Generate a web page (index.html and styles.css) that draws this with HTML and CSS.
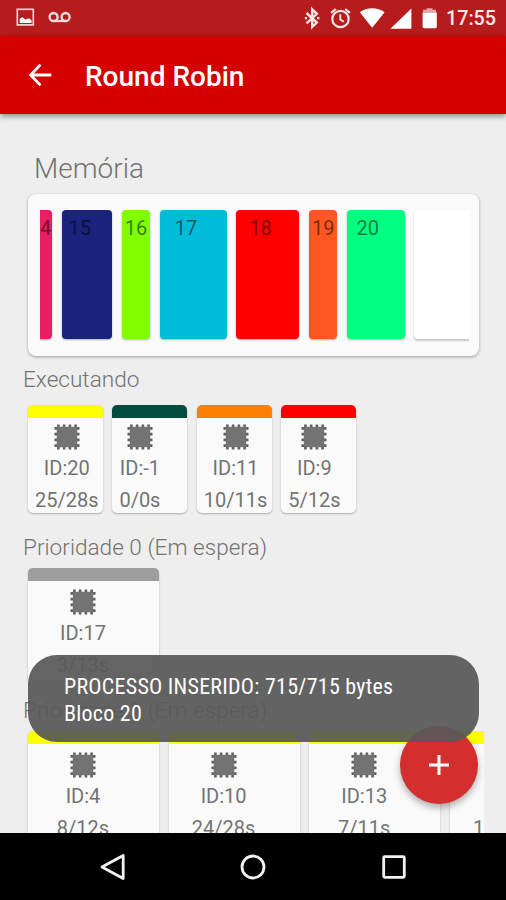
FILE: index.html
```html
<!doctype html>
<html lang="pt-BR">
  <head>
    <meta charset="UTF-8" />
    <meta name="viewport" content="width=device-width, initial-scale=1.0" />
    <title>Round Robin</title>
    <link rel="stylesheet" href="styles.css">
  </head>
  <body>
    <!-- Shared chip icon -->
    <svg class="defs" width="0" height="0">
      <symbol id="chip" viewBox="0 0 26 26">
        <path d="M4.4 0.5V25.5M10.1 0.5V25.5M15.9 0.5V25.5M21.6 0.5V25.5M0.5 4.4H25.5M0.5 10.1H25.5M0.5 15.9H25.5M0.5 21.6H25.5" stroke="#5f5f5f" stroke-width="2.6" fill="none" />
        <rect x="2.8" y="2.8" width="20.4" height="20.4" fill="#737373" />
      </symbol>
    </svg>

    <div class="status-bar">
      <svg class="status-left" width="56" height="20" viewBox="0 0 56 20" fill="none">
        <rect x="1.3" y="1.3" width="16" height="15.6" stroke="#f9dede" stroke-width="1.6" />
        <path d="M3.7 15V10.8L6.5 9.3L9.5 11.6L13.2 10.3L15.6 12.5V15Z" fill="#fff" />
        <circle cx="37.6" cy="9" r="4" stroke="#f9dede" stroke-width="2.3" />
        <circle cx="49.6" cy="9" r="4" stroke="#f9dede" stroke-width="2.3" />
        <path d="M37.6 13H49.6" stroke="#f9dede" stroke-width="2.3" />
      </svg>
      <svg class="status-right" width="134" height="24" viewBox="0 0 134 24" fill="none">
        <path d="M2.5 7L12.8 16.6L8.2 21V3.4L12.8 7.8L2.5 17.4" stroke="#fbe4e4" stroke-width="2.4" />
        <path d="M0.8 12.2h2.2M13 12.2h2.4" stroke="#fbe4e4" stroke-width="2.2" />
        <circle cx="36.5" cy="13" r="8.2" stroke="#fbe4e4" stroke-width="2.2" />
        <path d="M36.3 8.3V13.5L39.8 15.8" stroke="#fbe4e4" stroke-width="1.9" />
        <path d="M27.1 6.8L31.8 3M45.9 6.8L41.2 3" stroke="#fbe4e4" stroke-width="2.2" />
        <path d="M55.8 6.2C62.8 0.9 73.6 0.9 80.6 6.2L68.2 21.8Z" fill="#fff" />
        <path d="M107.4 2.4V22.7H86.4Z" fill="#fff" />
        <path d="M119 6.5V3.8H122.5V2.2H128.5V3.8H132V6.5Z" fill="#e5a7a7" />
        <path d="M118.6 6.5H132.8V20.8Q132.8 22.2 131.4 22.2H120Q118.6 22.2 118.6 20.8Z" fill="#fff" />
      </svg>
      <span class="clock">17:55</span>
    </div>

    <header class="app-bar">
      <svg width="24" height="24" viewBox="0 0 24 24" fill="none" stroke="#fff" stroke-width="2.8">
        <path d="M12.5 1.6L2.6 12L12.5 22.4M2.6 12H23.3" />
      </svg>
      <h1>Round Robin</h1>
    </header>

    <main>
      <h2 class="memory-title">Memória</h2>
      <section class="memory">
        <div class="blocks">
          <div class="block b14">4</div>
          <div class="block b15">15</div>
          <div class="block b16">16</div>
          <div class="block b17">17</div>
          <div class="block b18">18</div>
          <div class="block b19">19</div>
          <div class="block b20">20</div>
          <div class="block free"></div>
        </div>
      </section>

      <h3>Executando</h3>
      <div class="row running">
        <div class="card yellow">
          <div class="info"><svg><use href="#chip" /></svg><span>ID:20</span><span>25/28s</span></div>
        </div>
        <div class="card green">
          <div class="info"><svg><use href="#chip" /></svg><span>ID:-1</span><span>0/0s</span></div>
        </div>
        <div class="card orange">
          <div class="info"><svg><use href="#chip" /></svg><span>ID:11</span><span>10/11s</span></div>
        </div>
        <div class="card red">
          <div class="info"><svg><use href="#chip" /></svg><span>ID:9</span><span>5/12s</span></div>
        </div>
      </div>

      <h3>Prioridade 0 (Em espera)</h3>
      <div class="row waiting">
        <div class="card gray">
          <div class="info"><svg><use href="#chip" /></svg><span>ID:17</span><span>3/13s</span></div>
        </div>
      </div>

      <h3>Prioridade 1 (Em espera)</h3>
      <div class="row waiting">
        <div class="card yellow">
          <div class="info"><svg><use href="#chip" /></svg><span>ID:4</span><span>8/12s</span></div>
        </div>
        <div class="card yellow">
          <div class="info"><svg><use href="#chip" /></svg><span>ID:10</span><span>24/28s</span></div>
        </div>
        <div class="card yellow">
          <div class="info"><svg><use href="#chip" /></svg><span>ID:13</span><span>7/11s</span></div>
        </div>
        <div class="card yellow">
          <div class="info"><svg></svg><span></span><span>10/14s</span></div>
        </div>
      </div>
    </main>

    <button class="fab" aria-label="Inserir processo">
      <svg width="22" height="22" viewBox="0 0 22 22" stroke="#fff" stroke-width="3">
        <path d="M11 1V21M1 11H21" />
      </svg>
    </button>

    <div class="toast"><p>PROCESSO INSERIDO: 715/715 bytes<br>Bloco 20</p></div>

    <nav class="nav-bar">
      <svg width="28" height="28" viewBox="0 0 28 28"><path d="M3 14L24.2 2.4V25.6Z" /></svg>
      <svg width="28" height="28" viewBox="0 0 28 28"><circle cx="14" cy="14" r="11" /></svg>
      <svg width="28" height="28" viewBox="0 0 28 28"><rect x="3.7" y="3.7" width="20.6" height="20.6" rx="1" /></svg>
    </nav>
  </body>
</html>
```
FILE: styles.css
```css
* {
  box-sizing: border-box;
}

body {
  margin: 0;
  height: 900px;
  display: flex;
  flex-direction: column;
  position: relative;
  overflow: hidden;
  background: #eee;
  color: #737373;
  font-family: Roboto, "Liberation Sans", sans-serif;
}

h1,
h2,
h3,
p {
  margin: 0;
}

.defs {
  position: absolute;
}

/* Android status bar */
.status-bar {
  flex: none;
  height: 36px;
  display: flex;
  align-items: center;
  padding: 0 9px 0 16px;
  background: #b71c1c;
}

.status-right {
  margin-left: auto;
}

.clock {
  width: 51px;
  margin-left: 8px;
  padding-top: 2px;
  color: #fbe9e9;
  font-size: 19.7px;
  font-weight: 500;
  line-height: 24px;
}

/* Toolbar */
.app-bar {
  flex: none;
  height: 78px;
  display: flex;
  align-items: center;
  gap: 33px;
  padding-left: 28px;
  background: #d50000;
  box-shadow: 0 2px 6px rgba(0, 0, 0, 0.45);
  z-index: 1;
}

h1 {
  padding-top: 4px;
  color: #fff;
  font-size: 28px;
  font-weight: 500;
  line-height: 36px;
}

main {
  flex: 1;
  min-height: 0;
  overflow: hidden;
  padding: 37px 22px 0 24px;
}

.memory-title {
  margin-left: 10px;
  font-size: 28px;
  font-weight: 300;
  line-height: 36px;
}

/* Memory */
.memory {
  width: 451px;
  height: 162px;
  margin: 7px 0 0 4px;
  padding: 16px 10px 0 12px;
  background: #fafafa;
  border-radius: 8px;
  box-shadow: 0 1px 3px rgba(0, 0, 0, 0.35);
}

.blocks {
  display: flex;
  gap: 9.6px;
  height: 134px;
  overflow: hidden;
}

.block {
  flex: none;
  height: 129px;
  padding-top: 6px;
  border-radius: 4px;
  box-shadow: 0 1px 2px rgba(0, 0, 0, 0.3);
  color: rgba(0, 0, 0, 0.54);
  font-size: 20px;
  line-height: 24px;
}

.b14 { width: 12px; background: #e91e63; border-radius: 0 4px 4px 0; }
.b15 { width: 50.5px; padding-left: 7px; background: #1a237e; }
.b16 { width: 28.5px; padding-left: 3px; background: #7fff00; }
.b17 { width: 67px; padding-left: 15px; background: #00bcd8; }
.b18 { width: 63px; padding-left: 13px; background: #f00; }
.b19 { width: 28px; padding-left: 3px; background: #ff5722; }
.b20 { width: 58px; padding-left: 10px; background: #00ff80; }
.free { width: 80px; background: #fff; box-shadow: 0 2px 2px rgba(0, 0, 0, 0.2); }

/* Process queues */
h3 {
  margin-left: -1px;
  font-size: 22.6px;
  font-weight: 300;
  line-height: 30px;
}

.memory + h3 {
  margin-top: 9px;
}

.row {
  display: flex;
  gap: 9.4px;
  margin: 10px 0 20px;
  padding-left: 4px;
}

.card {
  --stripe: #9e9e9e;
  flex: none;
  width: 75px;
  height: 108px;
  border-top: 13px solid var(--stripe);
  border-radius: 5px;
  background: #fafafa;
  box-shadow: 0 1px 2px rgba(0, 0, 0, 0.28);
}

.yellow { --stripe: #ff0; }
.green { --stripe: #004d40; }
.orange { --stripe: #ff8000; }
.red { --stripe: #f00; }

.info {
  display: inline-flex;
  flex-direction: column;
  align-items: center;
  padding: 6px 0 0 7px;
  font-size: 20px;
  line-height: 24px;
}

.info svg {
  width: 26px;
  height: 26px;
}

.info span {
  height: 24px;
  margin-top: 6px;
}

.info span + span {
  margin-top: 8px;
}

.waiting {
  gap: 9.6px;
  margin: 5px 0 12px;
  overflow: hidden;
}

.waiting .card {
  width: 131px;
  height: 116px;
}

.waiting .info {
  width: 110px;
  padding: 8px 0 0;
}

/* Floating button */
.fab {
  position: absolute;
  left: 400px;
  top: 726px;
  width: 78px;
  height: 78px;
  display: flex;
  align-items: center;
  justify-content: center;
  padding: 0;
  border: 0;
  border-radius: 50%;
  background: #d32f2f;
  box-shadow: 0 4px 7px rgba(0, 0, 0, 0.3);
}

/* Toast */
.toast {
  position: absolute;
  left: 28px;
  top: 655px;
  width: 451px;
  height: 87px;
  padding: 18px 36px;
  border-radius: 29px;
  background: rgba(88, 88, 88, 0.93);
  color: #fff;
  z-index: 2;
}

.toast p {
  font-size: 22px;
  font-stretch: 75%;
  letter-spacing: 0.25px;
  line-height: 27px;
  white-space: nowrap;
}

/* Android navigation */
.nav-bar {
  flex: none;
  height: 67px;
  display: flex;
  justify-content: center;
  align-items: center;
  gap: 112.5px;
  background: #000;
  z-index: 3;
}

.nav-bar svg {
  fill: none;
  stroke: #f2f2f2;
  stroke-width: 2.8;
  stroke-linejoin: round;
}
```
